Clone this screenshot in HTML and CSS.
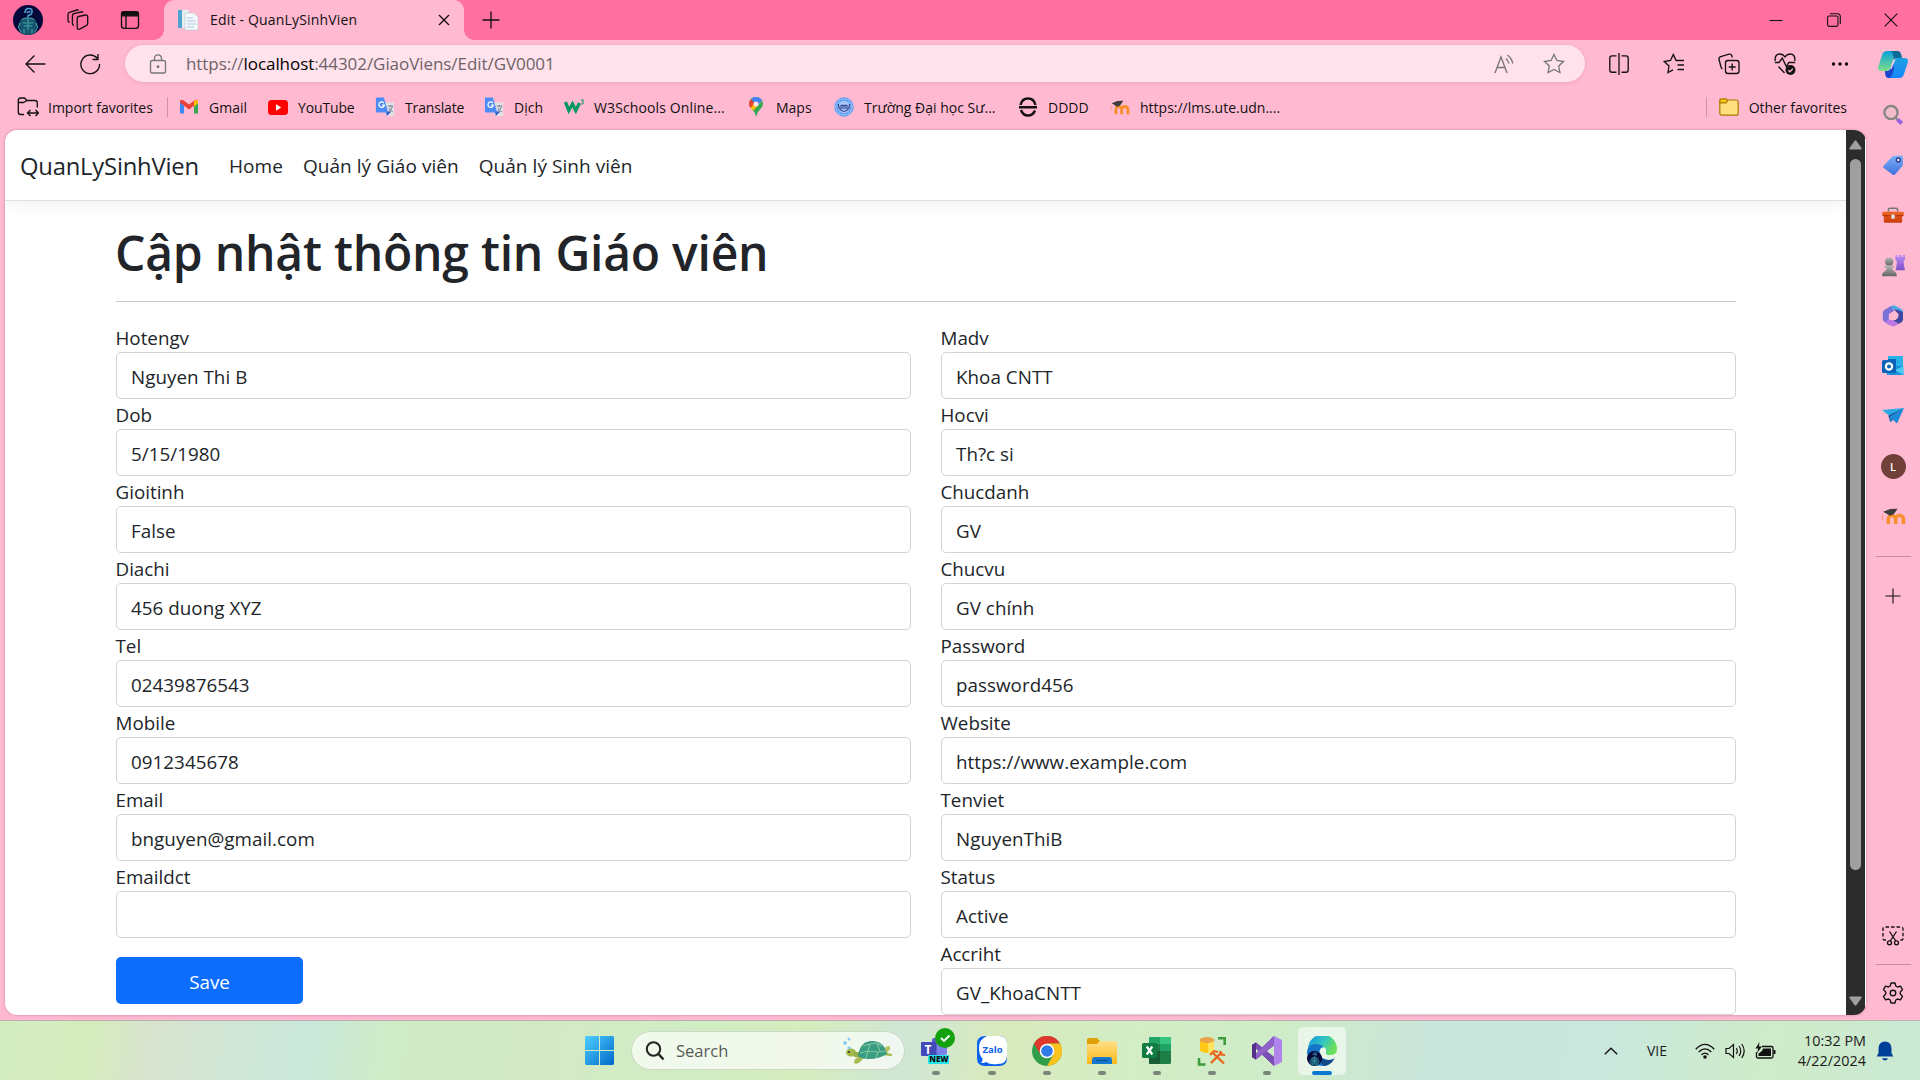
FILE: index.html
```html
<!DOCTYPE html>
<html lang="vi">
<head>
<meta charset="utf-8">
<title>Edit - QuanLySinhVien</title>
<link rel="stylesheet" href="styles.css">
</head>
<body>
<svg class="defs" width="0" height="0" aria-hidden="true">
  <defs>
    <linearGradient id="gWin" x1="0" y1="0" x2="1" y2="1"><stop offset="0" stop-color="#4fd0ff"/><stop offset="1" stop-color="#0067c9"/></linearGradient>
    <linearGradient id="gCopA" x1="0" y1="0" x2="0" y2="1"><stop offset="0" stop-color="#0a9fd8"/><stop offset="1" stop-color="#7fe08a"/></linearGradient>
    <linearGradient id="gCopB" x1="0" y1="0" x2="0" y2="1"><stop offset="0" stop-color="#1aa0e0"/><stop offset="1" stop-color="#1a86ff"/></linearGradient>
    <linearGradient id="gTag" x1="0" y1="0" x2="0" y2="1"><stop offset="0" stop-color="#7db2f3"/><stop offset="1" stop-color="#3f6fe0"/></linearGradient>
    <linearGradient id="gBox" x1="0" y1="0" x2="0" y2="1"><stop offset="0" stop-color="#f2682a"/><stop offset="1" stop-color="#c83a08"/></linearGradient>
    <linearGradient id="gPawn" x1="0" y1="0" x2="0" y2="1"><stop offset="0" stop-color="#b5b5b5"/><stop offset="1" stop-color="#666"/></linearGradient>
    <linearGradient id="gRook" x1="0" y1="0" x2="0" y2="1"><stop offset="0" stop-color="#bd8cf5"/><stop offset="1" stop-color="#7c4fc9"/></linearGradient>
    <linearGradient id="gEdge" x1="0" y1="0" x2="1" y2=".4"><stop offset="0" stop-color="#1795d8"/><stop offset=".55" stop-color="#2fc3c9"/><stop offset="1" stop-color="#6be05a"/></linearGradient>
    <linearGradient id="gFolder" x1="0" y1="0" x2="0" y2="1"><stop offset="0" stop-color="#ffe08a"/><stop offset="1" stop-color="#fbb917"/></linearGradient>
    <symbol id="moodle" viewBox="0 0 24 20">
      <path d="M7 18v-5.500a3.500 3.500 0 0 1 7 0V18M14 12.500a3.500 3.500 0 0 1 7.500 0V18" fill="none" stroke="#f98f2c" stroke-width="3.400"/>
      <path d="M2 5 9 2.200l7-.4-3 4.600q-1 2.600-5 2.600L5.500 7z" fill="#3c3c3c"/><path d="M1.500 8v6" stroke="#f3a08c" stroke-width="1.300"/>
    </symbol>
    <symbol id="translate" viewBox="0 0 20 22">
      <path d="M8 6h11a1 1 0 0 1 1 1v13a1 1 0 0 1-1 1h-8z" fill="#dfe1e6"/>
      <path d="M11 16h6l-5 5z" fill="#2f55c8"/>
      <path d="M1.200.5h7.600l4.700 16.500H1.200A1.200 1.200 0 0 1 0 15.800V1.700A1.200 1.200 0 0 1 1.200.5z" fill="#4c8bf5"/>
      <path d="M8.700 6.600A3 3 0 1 0 9.300 9H6.700" fill="none" stroke="#fff" stroke-width="1.400"/>
      <path d="M13 10h6M16 9v1.500M18 10.500c-.5 2.500-2 4.500-4 5.500M14.500 12c.8 2 2 3.300 4 4.200" fill="none" stroke="#67748a" stroke-width="1"/>
    </symbol>
    <symbol id="avatar" viewBox="0 0 30 30">
      <circle cx="15" cy="15" r="15" fill="#04083a"/>
      <path d="M8 14q7-4 14 0l2 6-2 5 1 3q-8 4-16 0l1-3-2-5z" fill="#17566f"/>
      <path d="M12 8q0-4.500 3.800-4.500T19 7q0 2.300-2.500 3T15 12.500M13.500 7.500l4-1" fill="none" stroke="#4fa3d6" stroke-width="1.500"/>
      <path d="M9 14.500q6-3 12 0M10 18h4M16 18h4M11 21h8M15 14v11M7 18l-1.500 4L8 27M23 18l1.500 4L22 27M11 24v4M19 24v4" fill="none" stroke="#45a0a8" stroke-width="1.100"/>
    </symbol>
  </defs>
</svg>

<div class="desktop">
  <header class="tabstrip">
    <div class="strip-tools">
      <svg width="30" height="30"><use href="#avatar"/></svg>
      <svg class="line" width="22" height="22" viewBox="0 0 22 22"><path d="M11.500 7.500 18.500 6q2-.3 2.200 1.700v6.800q0 1.600-1.500 2.200l-6.500 3.500q-2.300.9-2.500-1.500V9.500q0-1.600 1.300-2M7 16.500q-1.600-.3-1.600-2V7q0-1.700 1.500-2.300L15 2.800l1 .6M2.500 13.500Q1 13 1 11.500V5.500Q1 4 2.500 3.400L10.500.8l1 .5"/></svg>
      <svg class="line panel" width="20" height="20" viewBox="0 0 20 20"><rect x="1.500" y="1.700" width="17" height="16.600" rx="2.500"/><path d="M6 6v12"/><path d="M2 2.500h16v3.300H2z" fill="#111"/></svg>
    </div>
    <div class="tab">
      <svg width="20" height="22" viewBox="0 0 20 22"><path d="M0 1h11v18H0z" fill="#e6eef2"/><path d="M0 1h4v18H0z" fill="#4fa3cf"/><path d="M7 4h9l4 4v13H7z" fill="#f4f8fa" stroke="#b7c8d2" stroke-width=".6"/><path d="M9 9h6M9 12h9M9 15h9M9 18h7" stroke="#a9c6dc" stroke-width="1.200"/></svg>
      <span class="tab-title">Edit - QuanLySinhVien</span>
      <svg class="line tab-close" width="12" height="12" viewBox="0 0 12 12"><path d="m1 1 10 10M11 1 1 11"/></svg>
    </div>
    <svg class="line new-tab" width="18" height="18" viewBox="0 0 18 18"><path d="M9 .5v17M.5 9h17"/></svg>
    <div class="window-buttons">
      <svg class="thin" width="14" height="14" viewBox="0 0 14 14"><path d="M.5 7.500h13"/></svg>
      <svg class="thin" width="14" height="14" viewBox="0 0 14 14"><rect x=".6" y="3" width="10.400" height="10.400" rx="1.600"/><path d="M3 .8h7.500q2.800 0 2.800 2.800V11"/></svg>
      <svg class="thin" width="14" height="14" viewBox="0 0 14 14"><path d="m.7.7 12.600 12.600M13.300.7.7 13.300"/></svg>
    </div>
  </header>

  <div class="browser">
    <div class="browser-main">
      <div class="toolbar">
        <svg class="line" width="22" height="20" viewBox="0 0 22 20"><path d="M10.500 1.500 2 10l8.500 8.500M2 10h19.500"/></svg>
        <svg class="line" width="22" height="22" viewBox="0 0 22 22"><path d="M18.300 5.300A9.300 9.300 0 1 0 20.500 11M19 1v5.500h-5.500"/></svg>
        <div class="address">
          <svg class="line muted" width="18" height="20" viewBox="0 0 18 20"><rect x="1.500" y="6.500" width="15" height="12.500" rx="2"/><path d="M5.500 6.500V4.300a3.500 3.500 0 0 1 7 0v2.200"/><circle cx="9" cy="12.700" r=".8" fill="#666"/></svg>
          <span class="url">https://<b>localhost</b>:44302/GiaoViens/Edit/GV0001</span>
          <svg class="line muted" width="20" height="20" viewBox="0 0 20 20"><path d="M1 19 7 3l6 16M3.300 13.500h7.500M12 4.500q2.300 2 2.800 5M13.500 1Q18 4.500 18.700 9.500" /></svg>
          <svg class="line muted star" width="22" height="22" viewBox="0 0 22 22"><path d="m11 1.500 2.900 6 6.600 1-4.800 4.600 1.200 6.500L11 16.500l-5.900 3.100 1.200-6.500L1.500 8.500l6.600-1z"/></svg>
        </div>
        <svg class="line" width="22" height="22" viewBox="0 0 22 22"><path d="M8.500 2.800H4Q1.800 2.800 1.800 5v12q0 2.200 2.200 2.200h4.500M13.500 2.800H18q2.200 0 2.200 2.200v12q0 2.200-2.200 2.200h-4.500M11 0v22"/></svg>
        <svg class="line" width="22" height="22" viewBox="0 0 22 22"><path d="m10 16.800-5 2.800 1-6.500-4.700-4.600 6.200-1 2.800-6 2.800 6H21M14.500 12H21M14.500 16.500H21"/></svg>
        <svg class="line" width="22" height="22" viewBox="0 0 22 22"><rect x="7.500" y="7.500" width="13.500" height="13" rx="2.500"/><path d="M14.200 10.500v7M10.700 14h7M4.500 16Q3.500 15.500 3 14L1 6.500Q.6 4.300 2.700 3.600L11 1.200q2.200-.4 2.900 1.500l.4 1.800"/></svg>
        <svg class="line" width="22" height="24" viewBox="0 0 22 24"><path d="M1.200 9Q.5 2 6 2q3 0 5 2.800Q13 2 16 2q5.500 0 4.800 7M.8 10.500H5L8.300 6l4 8.500 2.500-4h6.400M4.500 14.500l6 6.500"/><circle cx="16.500" cy="18" r="5" fill="#111" stroke="none"/><path d="m14.300 18.200 1.700 1.600 2.900-3.200" stroke="#ffbad2"/></svg>
        <svg width="18" height="6" viewBox="0 0 18 6"><circle cx="2.500" cy="3" r="1.700"/><circle cx="9" cy="3" r="1.700"/><circle cx="15.500" cy="3" r="1.700"/></svg>
      </div>

      <nav class="bookmarks">
        <span class="mark import"><svg class="line" width="22" height="20" viewBox="0 0 22 20"><path d="M7 17.500H3.500Q1.300 17.500 1.300 15V3.500Q1.300 1 3.500 1h4L10 3.500h8q2.300 0 2.300 2.500v4.500M1.500 5.500h5L10 3.500M11 16H21.500M13.500 13l-3 3 3 3M18.500 13l3 3-3 3"/></svg>Import favorites</span>
        <span class="mark"><svg width="20" height="16" viewBox="0 0 20 16"><path d="M1 2v12.500h4V6z" fill="#4285f4"/><path d="M15 6v8.500h4V2z" fill="#34a853"/><path d="M1 3.500V2q1-2 3.300-.7L10 5.600l5.700-4.300Q18 0 19 2v1.500l-9 7z" fill="#ea4335"/><path d="M15 2v5.500l4-3V2q-1.500-2-4 0z" fill="#fbbc04"/></svg>Gmail</span>
        <span class="mark"><svg width="20" height="15" viewBox="0 0 20 15"><rect width="20" height="15" rx="3.500" fill="#f00"/><path d="m8 4.300 5.300 3.200L8 10.700z" fill="#fff"/></svg>YouTube</span>
        <span class="mark"><svg width="20" height="20"><use href="#translate"/></svg>Translate</span>
        <span class="mark"><svg width="20" height="20"><use href="#translate"/></svg>Dịch</span>
        <span class="mark"><svg width="20" height="16" viewBox="0 0 20 16"><path d="m1.500 3 3.300 8.500L8.500 5l3.300 6.500L15.500 4" fill="none" stroke="#059862" stroke-width="3.300"/><path d="M17 1h2.500L18.300 3q1.600.2 1 1.600-.7 1-2.300.2" fill="none" stroke="#059862"/></svg>W3Schools Online...</span>
        <span class="mark"><svg width="20" height="20" viewBox="0 0 20 20"><path d="M10 20Q9 15 6 12 3 9 3 7a7 7 0 0 1 14 0q0 2.500-3 5.500T10 20z" fill="#34a853"/><path d="M3 7a7 7 0 0 1 2-5l5 4-5.500 5Q3 9 3 7z" fill="#ea4335"/><path d="m4.500 11 8-9L16 4l-8.500 9.500z" fill="#fbbc04"/><path d="M5 2a7 7 0 0 1 11.200 1.500L11 9z" fill="#4285f4"/><circle cx="10" cy="7" r="2.500" fill="#ffe2eb"/></svg>Maps</span>
        <span class="mark"><svg width="20" height="20" viewBox="0 0 20 20"><circle cx="10" cy="10" r="9.700" fill="#5c9af2"/><circle cx="10" cy="10" r="8" fill="none" stroke="#b4d0f8" stroke-width="1.200" stroke-dasharray="1.500 .8"/><circle cx="10" cy="10" r="6.200" fill="#a9c8f7"/><path d="M4.500 7q-.5 6 5.500 7.500Q16 13 15.500 7M7 8.500v3.500M9 8.500v3.500M11 8.500v3.500M13 8.500v3.500M6.500 8.300h7" fill="none" stroke="#3b4d9a" stroke-width="1.200"/></svg>Trường Đại học Sư...</span>
        <span class="mark"><svg width="20" height="20" viewBox="0 0 20 20"><path d="M2.500 8Q4 1.500 10 1.500T17.500 8M1 10.200h18M3 13q2 5.500 7 5.500t7-5" fill="none" stroke="#151015" stroke-width="2.500"/></svg>DDDD</span>
        <span class="mark"><svg width="20" height="17"><use href="#moodle"/></svg>https://lms.ute.udn....</span>
        <span class="mark other"><svg width="20" height="18" viewBox="0 0 20 18"><rect x=".8" y="2" width="18.400" height="15.200" rx="2" fill="#ffdf80" stroke="#a97a00" stroke-width="1.200"/><path d="M.8 4.800V2.500Q.8.800 2.500.8H7l1.800 1.700L7 4.800z" fill="#f5c518" stroke="#a97a00" stroke-width="1.200"/></svg>Other favorites</span>
      </nav>

      <div class="viewport">
        <div class="page">
          <nav class="navbar">
            <a class="brand">QuanLySinhVien</a>
            <a class="link">Home</a>
            <a class="link">Quản lý Giáo viên</a>
            <a class="link">Quản lý Sinh viên</a>
          </nav>
          <main class="container">
            <h1>Cập nhật thông tin Giáo viên</h1>
            <hr>
            <form class="columns">
              <div class="column">
                <label>Hotengv</label><div class="field">Nguyen Thi B</div>
                <label>Dob</label><div class="field">5/15/1980</div>
                <label>Gioitinh</label><div class="field">False</div>
                <label>Diachi</label><div class="field">456 duong XYZ</div>
                <label>Tel</label><div class="field">02439876543</div>
                <label>Mobile</label><div class="field">0912345678</div>
                <label>Email</label><div class="field">bnguyen@gmail.com</div>
                <label>Emaildct</label><div class="field"></div>
                <button class="save" type="button">Save</button>
              </div>
              <div class="column">
                <label>Madv</label><div class="field">Khoa CNTT</div>
                <label>Hocvi</label><div class="field">Th?c si</div>
                <label>Chucdanh</label><div class="field">GV</div>
                <label>Chucvu</label><div class="field">GV chính</div>
                <label>Password</label><div class="field">password456</div>
                <label>Website</label><div class="field">https://www.example.com</div>
                <label>Tenviet</label><div class="field">NguyenThiB</div>
                <label>Status</label><div class="field">Active</div>
                <label>Accriht</label><div class="field">GV_KhoaCNTT</div>
              </div>
            </form>
          </main>
        </div>
        <div class="scrollbar">
          <svg width="13" height="10" viewBox="0 0 13 10"><path d="M5.500 1q1-1.300 2 0l5 7q.7 1.500-1 1.500h-10q-1.700 0-1-1.500z" fill="#9f9f9f"/></svg>
          <div class="thumb"></div>
          <svg class="down" width="13" height="10" viewBox="0 0 13 10"><path d="M5.500 9q1 1.300 2 0l5-7q.7-1.500-1-1.500h-10q-1.700 0-1 1.500z" fill="#9f9f9f"/></svg>
        </div>
      </div>
    </div>

    <aside class="sidebar">
      <div class="cell copilot"><svg width="30" height="27" viewBox="0 0 30 27"><path d="M9 0h10q3 0 4 3l1 4h-5q-3 0-4 3l-2.500 7q-1 3-3.500 3H3Q-.7 20 .3 16L4 4q1-4 5-4z" fill="url(#gCopA)"/><path d="M12 0h7q3 0 4 3l1 4h-5q-2 0-3 1.500L15 4q-1-4-3-4z" fill="#0b6d96"/><path d="M21 27H11q-3 0-3.500-3L7 20h3q2 0 3-3l2.500-7q1-3 3.500-3h7.500q4.500 0 3.200 4.500L26 23q-1 4-5 4z" fill="url(#gCopB)"/><path d="M7 20h3q2 0 3-3l2-5 1 6-2 6q-1 3-3 3-3 0-3.500-3z" fill="#1c45d0"/><path d="M17.500 8 13.500 18h-1L15 9.500q.8-1.500 2.500-1.500z" fill="#ffd3df"/></svg></div>
      <div class="cell"><svg width="22" height="22" viewBox="0 0 22 22"><circle cx="9" cy="8.500" r="6.600" fill="#f3bccb" stroke="#858585" stroke-width="2.300"/><path d="m13.500 13.500 2.500 2.500" stroke="#858585" stroke-width="2.200"/><path d="m15.500 15.500 4.300 4" stroke="#9a62e0" stroke-width="4"/></svg></div>
      <div class="cell"><svg width="22" height="22" viewBox="0 0 22 22"><path d="M12 2 19 1.500q2 0 2 1.800V10q0 1.500-1 2.500l-7 8q-1.300 1.200-2.600 0L1.800 14q-1.300-1.200 0-2.500l8-8.500q1-.8 2.200-1z" fill="url(#gTag)"/><circle cx="16.300" cy="6" r="2" fill="#dbe6ff" stroke="#343c93" stroke-width="1.400"/></svg></div>
      <div class="cell"><svg width="22" height="17" viewBox="0 0 24 18"><path d="M7 5V2.500Q7 1 8.500 1h7Q17 1 17 2.500V5" fill="none" stroke="#777" stroke-width="1.700"/><path d="M1.500 4.800h21q1.200 0 1.200 1.200v3.500H22v6q0 1.500-1.500 1.500h-17Q2 17 2 15.500v-6H.3V6q0-1.200 1.200-1.200z" fill="url(#gBox)"/><path d="M1 9.300h22" stroke="#a32d05"/><rect x="10" y="8" width="4" height="4.500" rx="1" fill="#dedede"/></svg></div>
      <div class="cell"><svg width="23" height="22" viewBox="0 0 24 23"><path d="M14 0h2v2h2V0h2.500v2H22V0h2v5l-1.500 1.500.8 6 .7 3.500H14l1-3.500.6-6L14 5z" fill="url(#gRook)"/><circle cx="7.500" cy="7" r="4.300" fill="url(#gPawn)"/><path d="M2.500 11h10v2.200H10.500q0 2.500 2.500 4 2.500 1 2.500 5H0q0-4 2.500-5 2.500-1.500 2.500-4H2.500z" fill="url(#gPawn)"/></svg></div>
      <div class="cell"><svg width="22" height="22" viewBox="0 0 22 22"><path d="M8 1.500 12 .3l7.500 4q1.500.8 1.500 2.700v4l-5-5-4-2H8z" fill="#45a9e8"/><path d="M9 1 2.300 5Q.8 6 .8 7.800V14q.2 2 2 3l4 3V9.500L13 5q-4-1-4-4z" fill="#7771d8"/><path d="M21 7v7.500q0 1.800-1.500 2.700l-3.500 2-6-4 3.500-.3Q17 13 16.500 9L12 4.500l4 .5z" fill="#3f479f"/><path d="m2.800 17 6.700 4q1.500.8 3.500 0l4-2.200-6-3.500-4.500-.5z" fill="#bb76e4"/><path d="M7.500 8.500 12 6.500l4 2.500-1 4.500-4 2-4-2.500z" fill="#ffbad2"/></svg></div>
      <div class="cell"><svg width="22" height="20" viewBox="0 0 22 20"><path d="M6 0h14q1 0 1 1v9H6z" fill="#29b1ea"/><path d="M6 3h8v7H6z" fill="#0a6bb8"/><path d="M4 10h17l.5 9H5z" fill="#1a92db"/><path d="m13 14 8.500-4v9z" fill="#4cc9f2"/><rect x="0" y="4" width="14" height="13" rx="1.500" fill="#0b64b8"/><circle cx="7" cy="10.500" r="3.100" fill="none" stroke="#fff" stroke-width="2.200"/></svg></div>
      <div class="cell"><svg width="22" height="16" viewBox="0 0 22 16"><path d="M0 2 22 0 8 8z" fill="#2aa8e8"/><path d="M22 0 15 15.500 8 9z" fill="#1b88d8"/><path d="m0 2 6.500 5.500L22 0 8 9l.3 5.500-2-7z" fill="#095c9f"/><path d="m8.300 14.500 3-2.800L8 9z" fill="#1176c0"/></svg></div>
      <div class="cell"><span class="profile-l">L</span></div>
      <div class="cell"><svg width="25" height="19" viewBox="0 0 24 20" preserveAspectRatio="none"><use href="#moodle"/></svg></div>
      <div class="divider"></div>
      <div class="cell add"><svg class="thin" width="16" height="16" viewBox="0 0 16 16"><path d="M8 .5v15M.5 8h15"/></svg></div>
      <div class="cell snip"><svg class="line" width="22" height="20" viewBox="0 0 22 20"><path d="M4 14H2.500Q1 14 1 12.500V3q0-2 2-2h16q2 0 2 2v9.500q0 1.500-1.500 1.500H18" stroke-dasharray="3.500 2"/><path d="m7.500 5.500 6.300 9.500M14.500 5.500 8.200 15"/><circle cx="7.500" cy="16.800" r="2"/><circle cx="14.500" cy="16.800" r="2"/></svg></div>
      <div class="divider low"></div>
      <div class="cell gear"><svg class="line" width="22" height="22" viewBox="0 0 22 22"><path d="M9 1h4l.8 3 1.700 1 3-.8 2 3.400L18.300 10v2l2.200 2.400-2 3.400-3-.8-1.700 1-.8 3H9l-.8-3-1.700-1-3 .8-2-3.400L3.700 12v-2L1.500 7.600l2-3.400 3 .8 1.700-1z" stroke-linejoin="round"/><circle cx="11" cy="11" r="2.800"/></svg></div>
    </aside>
  </div>

  <footer class="taskbar">
    <div class="dock">
      <svg class="start" width="29" height="29" viewBox="0 0 29 29"><path d="M1 0h13v14H0V1zM15 0h13l1 1v13H15zM0 15h14v14H1l-1-1zM15 15h14v13l-1 1H15z" fill="url(#gWin)"/></svg>
      <div class="search">
        <svg width="20" height="20" viewBox="0 0 20 20"><circle cx="8.500" cy="8" r="6.700" fill="none" stroke="#222" stroke-width="2"/><path d="m13.500 13 5 5.500" stroke="#222" stroke-width="2.400"/></svg>
        <span>Search</span>
        <svg class="turtle" width="52" height="30" viewBox="0 0 52 30"><circle cx="7" cy="3" r="1.500" fill="#8fcdf3"/><circle cx="3" cy="7" r="2" fill="#8fcdf3"/><circle cx="7" cy="12" r="1.800" fill="#8fcdf3"/><path d="M18 20q-6 2-6 7 3 2 6-1l5-5zM41 16l9 2q1 2-2 2l-8-1z" fill="#a9bc54"/><path d="m43 11 4-1q2 1 1 3l-4 5z" fill="#b4c25a"/><ellipse cx="9" cy="16.500" rx="5" ry="4" fill="#a3b84d"/><path d="M12 16h8v5h-8z" fill="#97b04c"/><circle cx="7" cy="16" r="1" fill="#333"/><path d="M16 20Q18 5 30 5t15 13q-8 5-18 5-8 0-11-3z" fill="#3a9c80"/><path d="m18 17 8-2 10 1 8-1M26 15l2-7 7-1 3 8M26 15l-2 7M36 16l-2 6M21 10l7-2M35 7l5 3" fill="none" stroke="#7fc7a0" stroke-width="1.100"/></svg>
      </div>
      <div class="app teams"><svg width="34" height="36" viewBox="0 0 34 36"><rect x="11" y="10" width="9" height="17" rx="2" fill="#5b5fd0"/><rect x="16" y="13" width="10" height="14" rx="2" fill="#7b83eb"/><rect x="0" y="14" width="15" height="14" rx="1" fill="#4348b8"/><text class="t-letter" x="3.500" y="25.500">T</text><circle cx="24" cy="10" r="10" fill="#13a10e"/><path d="m20 10 3 3 5.500-5.500" fill="none" stroke="#fff" stroke-width="1.900"/><rect x="7" y="27" width="21" height="9" rx="1" fill="#22e5ee"/><text class="t-new" x="8.300" y="34.400">NEW</text></svg></div>
      <div class="app"><svg width="30" height="30" viewBox="0 0 30 30"><path d="M8 0h14q8 0 8 8v14q0 8-8 8H8q-8 0-8-8V8q0-8 8-8z" fill="#0b62ef"/><path d="M10 0h12q8 0 8 8v11q0 9-9 9-8 1-12-2-3 1.500-5 .5 2-1 1.500-4Q2 19 2 12 2 3 10 0z" fill="#fff"/><text class="t-zalo" x="5.500" y="17.200">Zalo</text></svg></div>
      <div class="app"><svg width="30" height="30" viewBox="0 0 30 30"><circle cx="15" cy="15" r="15" fill="#2f9e4b"/><path d="M2 7.500A15 15 0 0 1 28 7.500H15l-6.500 11z" fill="#e0392b"/><path d="M28 7.500A15 15 0 0 1 15 30l6.500-11.300L15 7.500z" fill="#fcc31c"/><circle cx="15" cy="15" r="7.300" fill="#fff"/><circle cx="15" cy="15" r="5.800" fill="#2f7bea"/></svg></div>
      <div class="app"><svg width="30" height="26" viewBox="0 0 30 26"><path d="M0 2Q0 0 2 0h8l3 3-3 4H0z" fill="#e0a008"/><path d="M1 6h9l3-3h15q2 0 2 2v21H0V7z" fill="url(#gFolder)"/><path d="M5 26v-4q0-3 3-3h14q3 0 3 3v4z" fill="#1479ce"/><path d="M9 22.500h12" stroke="#084d93" stroke-width="1.300"/></svg></div>
      <div class="app"><svg width="30" height="28" viewBox="0 0 30 28"><rect x="7" y="0" width="22" height="27" rx="1.500" fill="#1f7d46"/><path d="M18 0h10q1 0 1 1v6H18z" fill="#36c481"/><path d="M7 1q0-1 1-1h10v7H7z" fill="#23a366"/><path d="M18 7h11v7H18z" fill="#21a366"/><path d="M7 14h11v13H8q-1 0-1-1z" fill="#185c37"/><rect x="0" y="6" width="15" height="15" rx="1.500" fill="#107c41"/><path d="m4.700 9.500 5.600 8M10.300 9.500l-5.600 8" stroke="#fff" stroke-width="2.200"/></svg></div>
      <div class="app"><svg width="30" height="30" viewBox="0 0 30 30"><path d="M3 4v11q7 4 14 0V4z" fill="#ffc914"/><path d="M11 4h6v11q-3 2-6 1.800z" fill="#ffe25e"/><ellipse cx="10" cy="4" rx="7.500" ry="3" fill="#e9a54b"/><path d="M21 2.300h6.700V9M2 22v6.500h6.500" fill="none" stroke="#3f9b3f" stroke-width="2.600"/><path d="m14 27 11-11M16 17l11 10.500" stroke="#e8651a" stroke-width="2.400"/><path d="m13 19 4-4 4 1M23 15l1 3.500 4 .5" fill="none" stroke="#e8651a" stroke-width="2"/></svg></div>
      <div class="app"><svg width="30" height="30" viewBox="0 0 30 30"><path fill-rule="evenodd" d="M0 9 4 6.500 10 11.500 22 0V30L10 18.500 4 23.500 0 21zM4 10.500v9L7.500 15zM22 9.500 14.500 15l7.500 6z" fill="#68409c"/><path d="M0 9 4 6.500 22 21V30z" fill="#7a4fb5"/><path d="m0 21 22-21V9.500L4 23.500z" fill="#8f62c9"/><path d="M0 9 4 6.500v4.500l0 12.500L0 21z" fill="#52308a"/><path d="m22 0 8 4v22l-8 4z" fill="#b184ec"/></svg></div>
      <div class="app active"><svg width="30" height="30" viewBox="0 0 30 30"><path d="M1 13A14.500 14.500 0 0 1 30 13q0 6-7 6-5 0-4-3 1-4-3-5Q9 8 1 17z" fill="url(#gEdge)"/><path d="M0 16q1-8 9-8 5 0 7.500 3-4 1-4 5 1 8 9 8 3 0 6-1.500Q23 30 15 30 1 29 0 16z" fill="#1576c8"/><path d="M12.500 16q1 8 9 8 3 0 6-1.500Q23 30 17 30q-8-5-4.500-14z" fill="#114a8b"/></svg><svg class="mini" width="15" height="15" viewBox="0 0 30 30"><use href="#avatar"/></svg></div>
    </div>
    <div class="tray">
      <svg class="line chevron" width="14" height="8" viewBox="0 0 14 8"><path d="m.8 7.300 6.200-6 6.200 6"/></svg>
      <span class="lang">VIE</span>
      <svg class="line wifi" width="20" height="16" viewBox="0 0 20 16"><path d="M.8 6.200Q10-3.500 19.200 6.200M3.700 9q6.300-6.300 12.600 0M6.500 11.800q3.500-3.500 7 0"/><circle cx="10" cy="14" r="1.800" fill="#111" stroke="none"/></svg>
      <svg class="line vol" width="20" height="16" viewBox="0 0 20 16"><path d="M1 5.500h3L8.500 1.500v13L4 10.500H1zM11.300 5q2 3 0 6M14 3q3.500 5 0 10M16.700 1q5 7 0 14" stroke-width="1.200"/></svg>
      <svg class="batt" width="21" height="18" viewBox="0 0 21 18"><path d="M7 4.500h9.500q1.500 0 1.500 1.500v8.500q0 1.500-1.500 1.500H3q-1.500 0-1.500-1.500V10" fill="none" stroke="#111" stroke-width="1.300"/><path d="M8 6.500h8v7.500H3.500v-2.500L7 9z" fill="#111"/><path d="M4.500 0 .5 6.500h2.800L2 11l5-6.500H4zM18.500 8h2v4h-2z" fill="#111"/></svg>
      <div class="clock"><span>10:32 PM</span><span>4/22/2024</span></div>
      <svg class="bell" width="18" height="20" viewBox="0 0 18 20"><path d="M9 .5q6 0 6.500 6.500v5l1.800 3.500H.7L2.500 12V7Q3 .5 9 .5zM6 17.300h6q-1 2.200-3 2.200t-3-2.200z" fill="#003f98"/></svg>
    </div>
  </footer>
</div>
</body>
</html>
```

FILE: styles.css
```css
* { box-sizing: border-box; }
body { margin: 0; font-family: "Open Sans", "Noto Sans", sans-serif; color: #212529; overflow: hidden; }
svg { flex: none; display: block; }
.defs { position: absolute; }
.line { fill: none; stroke: #151015; stroke-width: 1.35; }
.thin { fill: none; stroke: #151015; stroke-width: 1.1; }
.muted { stroke: #777; }

.desktop { width: 1920px; height: 1080px; display: flex; flex-direction: column; background: #ffbad2; }

/* tab strip */
.tabstrip { height: 40px; flex: none; display: flex; align-items: center; background: #ff6f9f; }
.strip-tools { width: 164px; display: flex; align-items: center; padding-left: 13px; gap: 24px; }
.panel { margin-left: 7px; }
.tab { position: relative; width: 300px; height: 40px; display: flex; align-items: center; padding: 0 14px; background: #ffbad2; border-radius: 10px 10px 0 0; }
.tab::before, .tab::after { content: ""; position: absolute; bottom: 0; width: 10px; height: 10px; }
.tab::before { left: -10px; background: radial-gradient(circle at 0 0, transparent 9.5px, #ffbad2 10px); }
.tab::after { right: -10px; background: radial-gradient(circle at 100% 0, transparent 9.5px, #ffbad2 10px); }
.tab-title { margin-left: 12px; padding-bottom: 1px; font-size: 14px; letter-spacing: .18px; color: #111; white-space: nowrap; }
.tab-close { margin-left: auto; }
.new-tab { margin-left: 18px; }
.window-buttons { margin-left: auto; display: flex; gap: 43.500px; padding-right: 22px; }

.browser { height: 981px; flex: none; display: flex; box-shadow: inset 0 -1px #b7b3ae; }
.browser-main { width: 1866px; display: flex; flex-direction: column; }

/* toolbar */
.toolbar { height: 47px; display: grid; grid-template-columns: 55px 56px 1460px 13px repeat(5, 55.300px); align-items: center; justify-items: center; padding-left: 7px; }
.toolbar > svg:nth-child(4) { grid-column: 5; }
.address { justify-self: start; margin-left: 7px; width: 1460px; height: 37px; display: flex; align-items: center; padding: 0 20px 0 24px; border-radius: 19px; background: #ffe2eb; box-shadow: 0 1px 4px rgba(190, 80, 120, .22); }
.url { margin: 0 auto 0 19px; padding-bottom: 1px; font-size: 17px; letter-spacing: -.06px; color: #6d6268; white-space: nowrap; }
.url b { font-weight: 400; color: #000; }
.star { margin-left: 29px; }

/* favorites bar */
.bookmarks { height: 43px; display: grid; grid-template-columns: 162px 89px 107px 109px 80px 182px 88px 184px 92px 180px 1fr; align-items: center; padding: 0 19px 3px 17px; font-size: 14px; color: #111; white-space: nowrap; }
.mark { display: flex; align-items: center; gap: 10px; position: relative; }
.mark:nth-child(n+3):nth-child(-n+4) { letter-spacing: -.15px; }
.mark:nth-child(6) { letter-spacing: .12px; }
.import { gap: 9px; }
.import::after { content: ""; width: 1px; height: 20px; margin-left: 5px; background: #cf93a8; }
.other { justify-self: end; border-left: 1px solid #cf93a8; height: 20px; padding-left: 12px; }

/* page area */
.viewport { height: 885px; margin-left: 5px; display: flex; border-radius: 12px; overflow: hidden; background: #fff; box-shadow: 0 0 3px rgba(130, 40, 80, .4); }
.page { width: 1841px; overflow: hidden; }
.navbar { height: 71px; display: flex; align-items: center; padding: 1px 15px 0; border-bottom: 1px solid #dee2e6; box-shadow: 0 5px 15px rgba(0, 0, 0, .05); font-size: 19px; letter-spacing: .05px; white-space: nowrap; }
.brand { width: 209px; font-size: 23.800px; letter-spacing: -.2px; }
.link { margin-right: 20px; }
.container { width: 1620px; margin-left: 111px; }
h1 { margin: 20px 0 0 -1px; height: 60px; font-size: 48px; line-height: 64px; font-weight: 600; letter-spacing: -.22px; white-space: nowrap; }
hr { margin: 20px 0; height: 1px; border: 0; background: #c7c8c9; }
.columns { display: grid; grid-template-columns: 1fr 1fr; gap: 30px; font-size: 18.800px; }
.column { display: flex; flex-direction: column; }
label { height: 30px; line-height: 32px; text-indent: -.5px; }
.field { height: 47px; line-height: 49px; padding-left: 14px; border: 1px solid #ced4da; border-radius: 5px; background: #fff; letter-spacing: .04px; white-space: nowrap; }
.save { width: 187px; height: 47px; margin-top: 19px; border: 0; border-radius: 5px; background: #0d6efd; color: #fff; font: inherit; padding: 2px 0 0; }

.scrollbar { width: 19px; display: flex; flex-direction: column; align-items: center; padding: 10px 0 9px; background: #2c2c2c; }
.thumb { width: 11px; height: 711px; margin-top: 9px; border-radius: 6px; background: #9f9f9f; }
.down { margin-top: auto; }

/* sidebar */
.sidebar { flex: 1; display: flex; flex-direction: column; align-items: center; padding: 0 0 3px; }
.cell { height: 50.150px; display: flex; align-items: center; justify-content: center; }
.copilot { padding-bottom: 2px; }
.profile-l { width: 25px; height: 25px; border-radius: 50%; background: #704039; color: #fff; font-size: 11px; font-weight: 600; line-height: 25px; text-align: center; }
.divider { width: 35px; height: 1px; margin: 15px 0 14px; background: #c88a9f; }
.snip { margin-top: auto; }
.low { margin: 3px 0; }

/* taskbar */
.taskbar { position: relative; height: 59px; flex: none; display: flex; align-items: center; background: linear-gradient(100deg, #d3edc1 0, #d5ebbd 5%, #d8e4cf 8%, #cae8dc 16%, #cfebc8 20%, #d3e9c5 28%, #d1edc4 36%, #d5edbe 42%, #cfe6d5 47%, #d8eabd 52%, #d2edc5 60%, #cfecc9 67%, #c9e4dc 75%, #cae8dc 84%, #cfebc8 92%, #cae9d5 100%); }
.dock { display: flex; align-items: center; margin-left: 585px; }
.search { width: 274px; height: 39px; margin: 0 5px 0 17px; display: flex; align-items: center; padding: 0 10px 0 13px; border: 1px solid #ccd8c4; border-radius: 20px; background: rgba(255, 255, 255, .68); font-size: 16.500px; color: #565b56; }
.search span { margin-left: 11px; }
.turtle { margin-left: auto; }
.app { position: relative; width: 48px; height: 48px; margin-left: 7px; display: flex; align-items: center; justify-content: center; border-radius: 5px; }
.dock > .teams { width: 50px; margin-left: 1px; }
.teams svg { margin: -9px 0 0 4px; }
.app::after { content: ""; position: absolute; bottom: 0; left: calc(50% - 4px); width: 8px; height: 4px; border-radius: 2px; background: #7b8478; }
.active { background: rgba(255, 255, 255, .55); }
.active::after { left: 14px; width: 20px; background: #0b78d4; }
.mini { position: absolute; left: 9px; top: 24px; }
.t-letter { font: 700 12px "Open Sans", sans-serif; fill: #fff; }
.t-new { font: 800 8px "Open Sans", sans-serif; fill: #111; }
.t-zalo { font: 700 9.500px "Open Sans", sans-serif; fill: #0b62ef; }

.tray { margin-left: auto; display: flex; align-items: center; padding-right: 26px; color: #1b1b1b; }
.lang { margin-left: 29px; width: 48px; font-size: 14px; }
.vol { margin-left: 10px; }
.batt { margin-left: 10px; }
.clock { width: 90px; display: flex; flex-direction: column; align-items: flex-end; font-size: 14.400px; line-height: 20px; }
.bell { margin-left: 10px; }
```
